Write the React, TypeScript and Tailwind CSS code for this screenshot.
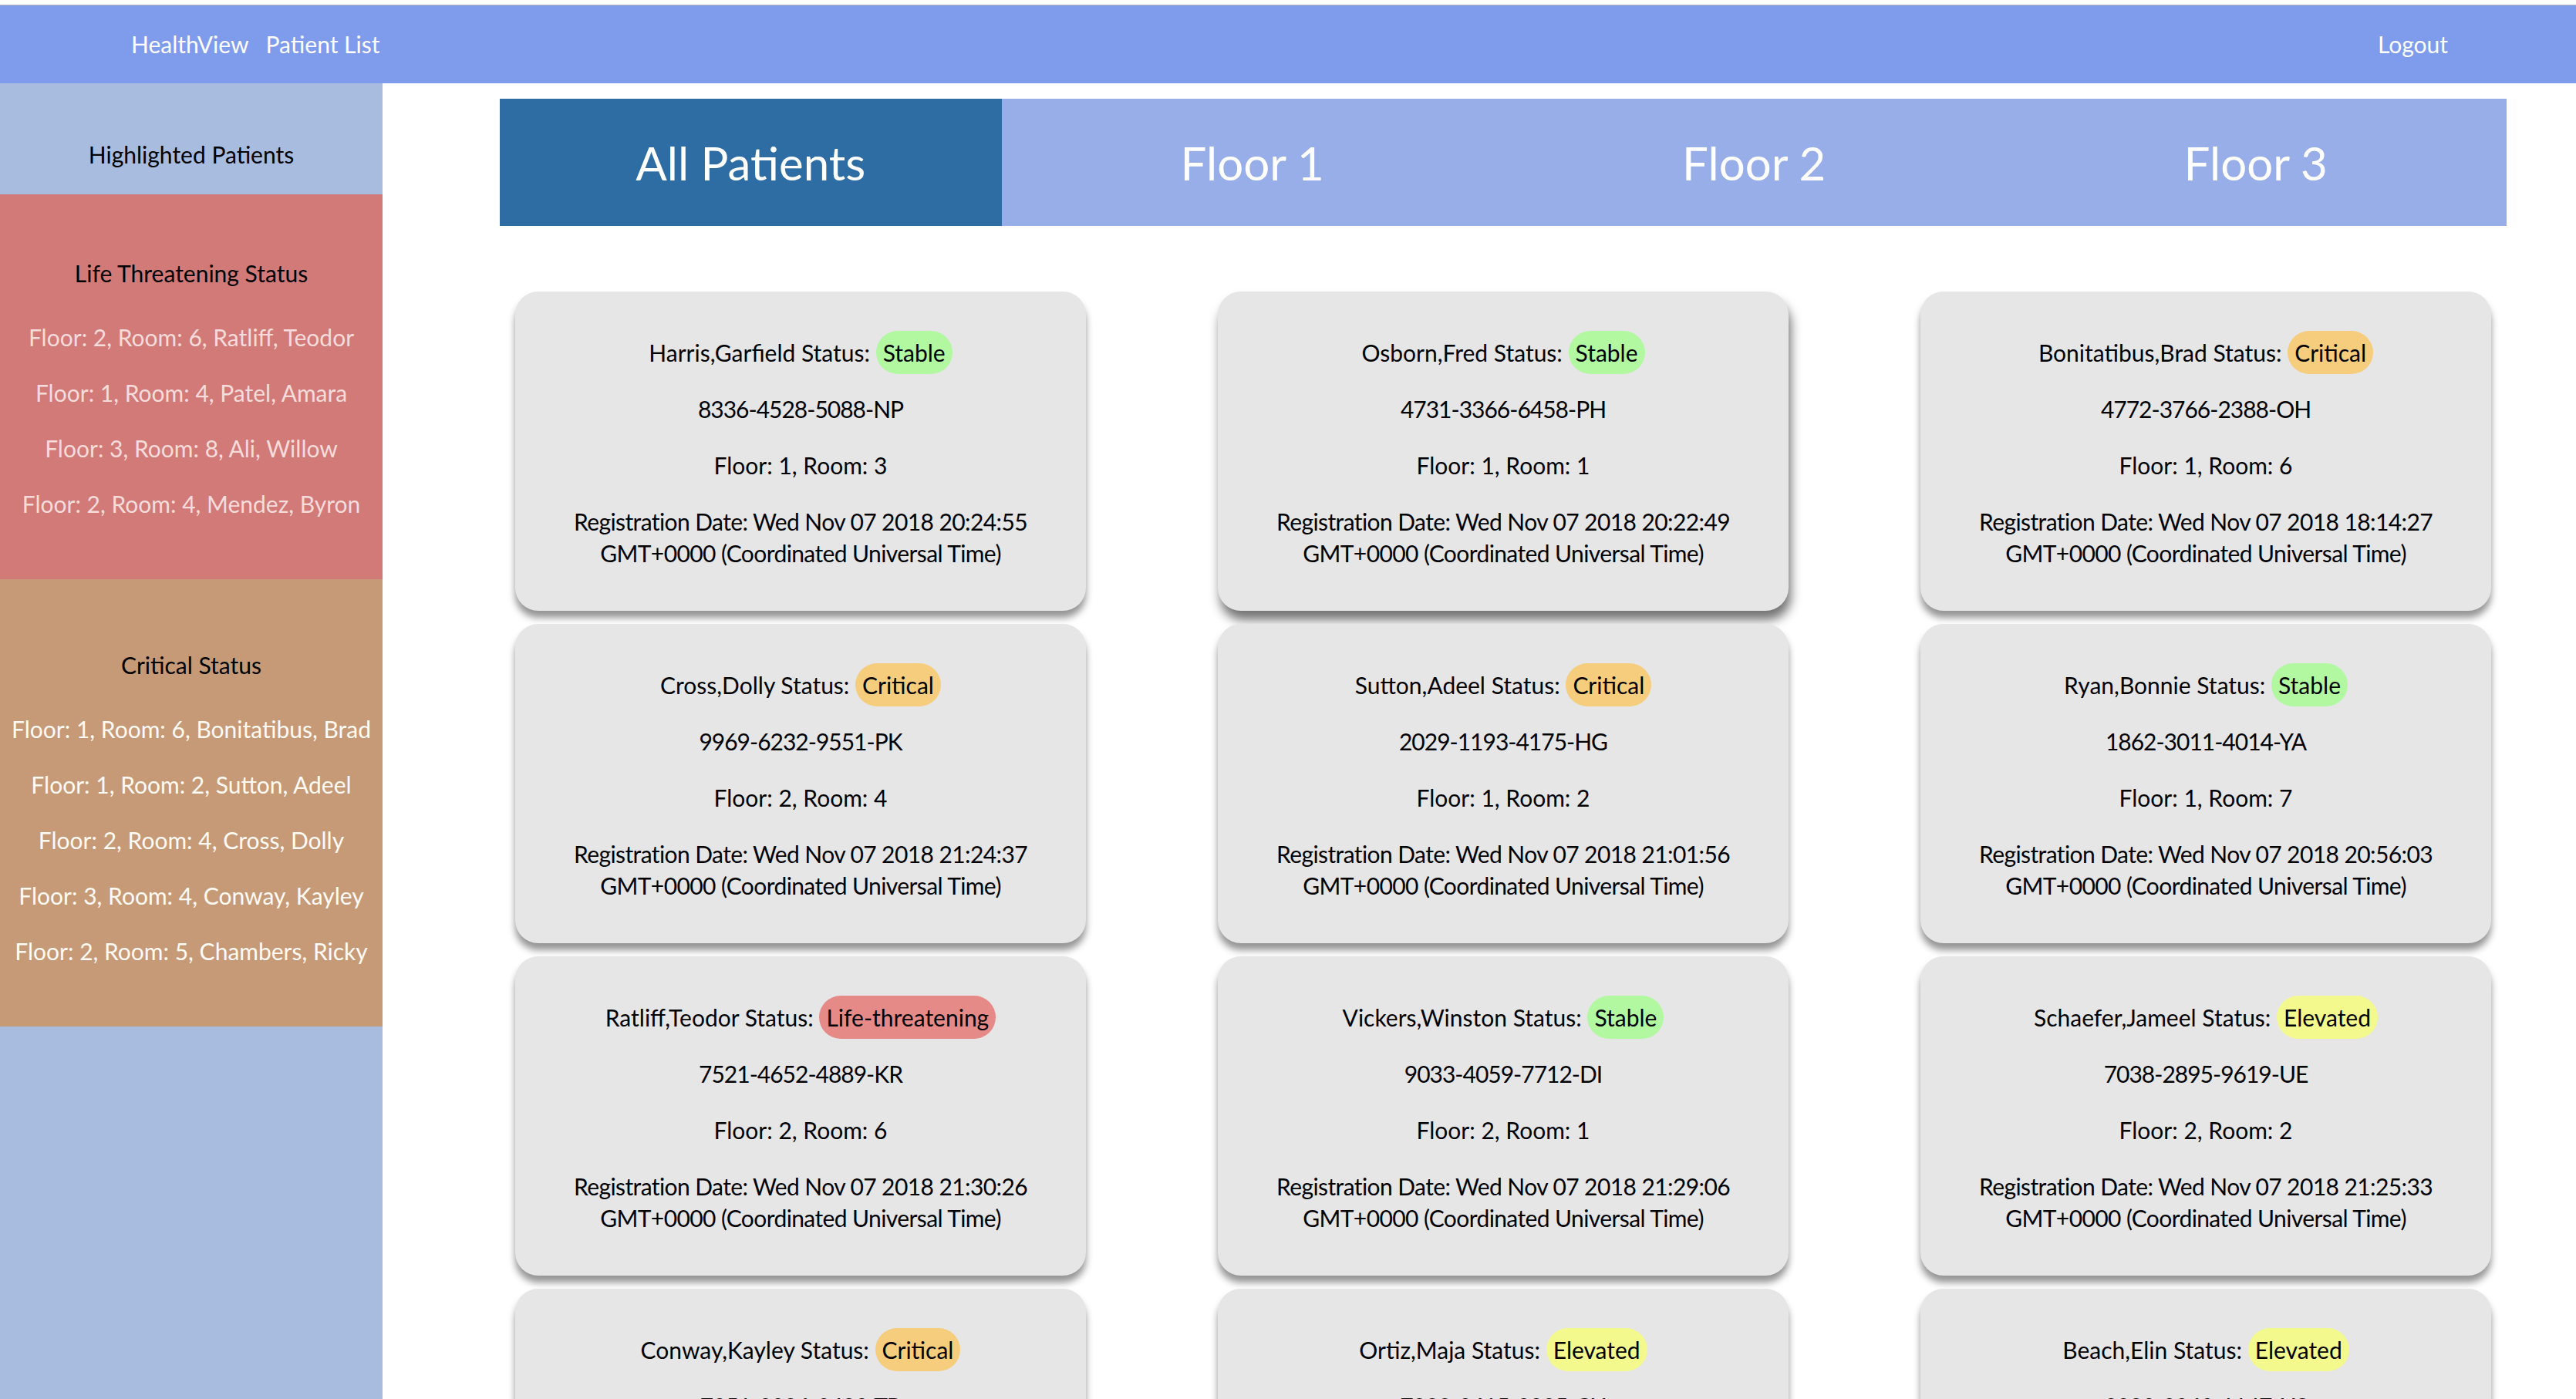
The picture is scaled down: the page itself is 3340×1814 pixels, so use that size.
import React from "react";

type Status = "Stable" | "Critical" | "Life-threatening" | "Elevated";

const badgeClass: Record<Status, string> = {
  Stable: "bg-[#b1f8a1]",
  Critical: "bg-[#f6cd7c]",
  "Life-threatening": "bg-[#e68a88]",
  Elevated: "bg-[#f3f98c]",
};

type Patient = {
  name: string;
  status: Status;
  id: string;
  floor: number;
  room: number;
  time: string;
  strong?: boolean;
};

const patients: Patient[] = [
  { name: "Harris,Garfield", status: "Stable", id: "8336-4528-5088-NP", floor: 1, room: 3, time: "20:24:55" },
  { name: "Osborn,Fred", status: "Stable", id: "4731-3366-6458-PH", floor: 1, room: 1, time: "20:22:49", strong: true },
  { name: "Bonitatibus,Brad", status: "Critical", id: "4772-3766-2388-OH", floor: 1, room: 6, time: "18:14:27" },
  { name: "Cross,Dolly", status: "Critical", id: "9969-6232-9551-PK", floor: 2, room: 4, time: "21:24:37" },
  { name: "Sutton,Adeel", status: "Critical", id: "2029-1193-4175-HG", floor: 1, room: 2, time: "21:01:56" },
  { name: "Ryan,Bonnie", status: "Stable", id: "1862-3011-4014-YA", floor: 1, room: 7, time: "20:56:03" },
  { name: "Ratliff,Teodor", status: "Life-threatening", id: "7521-4652-4889-KR", floor: 2, room: 6, time: "21:30:26" },
  { name: "Vickers,Winston", status: "Stable", id: "9033-4059-7712-DI", floor: 2, room: 1, time: "21:29:06" },
  { name: "Schaefer,Jameel", status: "Elevated", id: "7038-2895-9619-UE", floor: 2, room: 2, time: "21:25:33" },
  { name: "Conway,Kayley", status: "Critical", id: "7251-3086-3483-TB", floor: 3, room: 4, time: "21:18:40" },
  { name: "Ortiz,Maja", status: "Elevated", id: "7882-2615-2825-CU", floor: 3, room: 2, time: "21:12:09" },
  { name: "Beach,Elin", status: "Elevated", id: "2080-0040-1147-US", floor: 3, room: 1, time: "21:05:51" },
];

const lifeThreatening = [
  "Floor: 2, Room: 6, Ratliff, Teodor",
  "Floor: 1, Room: 4, Patel, Amara",
  "Floor: 3, Room: 8, Ali, Willow",
  "Floor: 2, Room: 4, Mendez, Byron",
];

const critical = [
  "Floor: 1, Room: 6, Bonitatibus, Brad",
  "Floor: 1, Room: 2, Sutton, Adeel",
  "Floor: 2, Room: 4, Cross, Dolly",
  "Floor: 3, Room: 4, Conway, Kayley",
  "Floor: 2, Room: 5, Chambers, Ricky",
];

function Card({ p }: { p: Patient }) {
  return (
    <div
      className={
        "bg-[#e6e6e6] rounded-[30px] h-[414px] pt-[59px] pb-[54px] flex flex-col gap-[32px] items-center text-center text-black text-[30px] leading-[41px] " +
        (p.strong
          ? "shadow-[3px_12px_14px_rgba(0,0,0,0.55)]"
          : "shadow-[0_9px_10px_rgba(0,0,0,0.42)]")
      }
    >
      <p className="whitespace-nowrap">
        {p.name} Status:{" "}
        <span className={"rounded-full px-[9px] py-[10px] " + badgeClass[p.status]}>{p.status}</span>
      </p>
      <p className="tracking-[-1px]">{p.id}</p>
      <p>
        Floor: {p.floor}, Room: {p.room}
      </p>
      <p className="px-[16px] tracking-[-0.6px] whitespace-nowrap">
        Registration Date: Wed Nov 07 2018 {p.time}
        <br />
        GMT+0000 (Coordinated Universal Time)
      </p>
    </div>
  );
}

export default function App() {
  const tabs = ["All Patients", "Floor 1", "Floor 2", "Floor 3"];
  return (
    <div className="min-h-screen bg-white font-['Lato','Noto_Sans',sans-serif]">
      <div className="h-[7px] bg-white border-b border-[#b8b8b8]" />
      <nav className="h-[101px] bg-[#7f9bec] flex items-center text-white text-[30px]">
        <span className="ml-[170px]">HealthView</span>
        <span className="ml-[22px]">Patient List</span>
        <span className="ml-auto mr-[166px]">Logout</span>
      </nav>
      <div className="flex">
        <aside className="w-[496px] shrink-0 bg-[#a8bce0] min-h-[1706px] text-[30px] leading-[40px] text-center">
          <div className="pt-[72px] pb-[32px] text-black">Highlighted Patients</div>
          <div className="bg-[#d27a78] pt-[82px] pb-[78px] flex flex-col">
            <div className="text-black mb-[43px]">Life Threatening Status</div>
            <div className="flex flex-col gap-[32px] text-[#f5dcdb]">
              {lifeThreatening.map((t) => (
                <div key={t}>{t}</div>
              ))}
            </div>
          </div>
          <div className="bg-[#c69a77] pt-[91px] pb-[78px] flex flex-col">
            <div className="text-black mb-[43px]">Critical Status</div>
            <div className="flex flex-col gap-[32px] text-[#fffaf4]">
              {critical.map((t) => (
                <div key={t} className="whitespace-nowrap">{t}</div>
              ))}
            </div>
          </div>
        </aside>
        <main className="flex-1 min-w-0">
          <div className="ml-[152px] mt-[20px] w-[2602px] flex">
            {tabs.map((t, i) => (
              <div
                key={t}
                className={
                  "flex-1 h-[165px] flex items-center justify-center text-white text-[60px] " +
                  (i === 0 ? "bg-[#2e6da4]" : "bg-[#98aee8]")
                }
              >
                {t}
              </div>
            ))}
          </div>
          <div className="ml-[152px] w-[2602px] px-[20px] mt-[85px] grid grid-cols-3 gap-x-[171px] gap-y-[17px] pb-[40px]">
            {patients.map((p) => (
              <Card key={p.name} p={p} />
            ))}
          </div>
        </main>
      </div>
    </div>
  );
}
